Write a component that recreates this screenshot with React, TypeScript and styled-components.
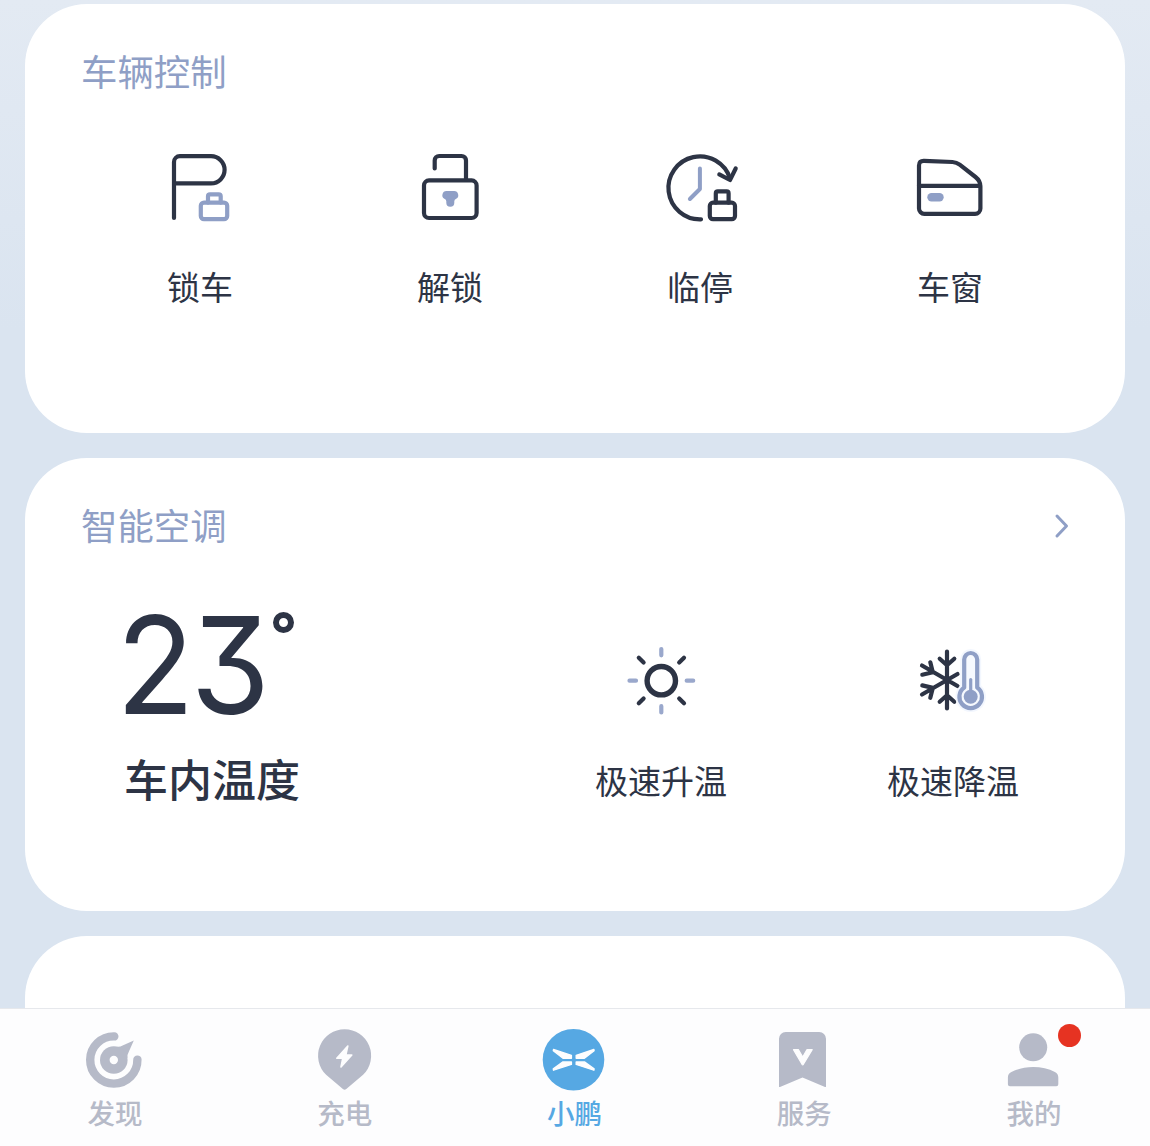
import React from 'react';
import styled, { createGlobalStyle } from 'styled-components';

const ink = '#2d3445';
const accent = '#8f9fc6';
const muted = '#b6bac8';
const brand = '#56a8e3';

const GlobalStyle = createGlobalStyle`
  *, *::before, *::after { box-sizing: border-box; }
  body {
    margin: 0;
    overflow: hidden;
    font-family: "Noto Sans CJK SC", "Noto Sans", sans-serif;
    color: ${ink};
  }
`;

const Screen = styled.div`
  display: flex;
  flex-direction: column;
  width: 1150px;
  height: 1146px;
  overflow: hidden;
  background: linear-gradient(180deg, #e3eaf3 0, #dae4f0 330px);
`;

const Feed = styled.main`
  flex: 1;
  min-height: 0;
  display: flex;
  flex-direction: column;
  gap: 25px;
  padding: 4px 25px 0;
  overflow: hidden;
`;

const Card = styled.section<{ $height: number }>`
  flex: none;
  height: ${(p) => p.$height}px;
  padding-top: 44px;
  border-radius: 62px;
  background: #fff;
`;

const CardHeader = styled.header`
  display: flex;
  align-items: center;
  justify-content: space-between;
  height: 44px;
  padding: 0 54px 0 56px;
`;

const CardTitle = styled.h2`
  margin: 0;
  font-size: 36.4px;
  font-weight: 400;
  line-height: 44px;
  color: ${accent};
`;

const ControlGrid = styled.div`
  display: grid;
  grid-template-columns: repeat(4, 1fr);
  padding: 56px 50px 0;
`;

const Action = styled.button<{ $gap: number }>`
  display: flex;
  flex-direction: column;
  align-items: center;
  gap: ${(p) => p.$gap}px;
  padding: 0;
  border: 0;
  background: none;
  font: inherit;
  color: inherit;
`;

const ActionLabel = styled.span`
  font-size: 33px;
  line-height: 40px;
  white-space: nowrap;
`;

const Climate = styled.div`
  display: grid;
  grid-template-columns: 391px 292px 292px;
  padding-left: 99px;
`;

const Temperature = styled.div`
  display: flex;
  flex-direction: column;
  padding-top: 48px;
`;

const Reading = styled.div`
  display: flex;
  height: 142px;
`;

const Degrees = styled.span`
  width: 156px;
  margin-left: -10px;
  font-family: Inter, sans-serif;
  font-size: 135px;
  font-weight: 400;
  line-height: 142px;
  letter-spacing: -7px;
  font-feature-settings: "cv09" 1, "tnum" 1;
  transform: scaleX(0.95);
  transform-origin: left center;
  white-space: nowrap;
`;

const DegreeMark = styled.i`
  width: 21px;
  height: 21px;
  margin-top: 18px;
  margin-left: 3px;
  border: 6px solid ${ink};
  border-radius: 50%;
`;

const TemperatureLabel = styled.span`
  margin-top: 16px;
  font-size: 44px;
  font-weight: 500;
  line-height: 52px;
`;

const ClimateAction = styled.div`
  display: flex;
  justify-content: center;
  padding-top: 95px;
`;

const TabBar = styled.nav`
  flex: none;
  display: grid;
  grid-template-columns: repeat(5, 1fr);
  height: 138px;
  padding: 19px 1px 0 0;
  border-top: 1px solid #e6e8ec;
  background: #fdfdfe;
`;

const Tab = styled.a<{ $active?: boolean }>`
  position: relative;
  display: flex;
  flex-direction: column;
  align-items: center;
  gap: 4px;
  color: ${(p) => (p.$active ? brand : muted)};
`;

const TabLabel = styled.span`
  font-size: 27.5px;
  font-weight: 500;
  line-height: 32px;
`;

const Badge = styled.i`
  position: absolute;
  top: -4px;
  left: 139px;
  width: 23px;
  height: 23px;
  border-radius: 50%;
  background: #e63322;
`;

const LineIcon = styled.svg`
  display: block;
  width: 80px;
  height: 80px;
  fill: none;
  stroke: ${ink};
  stroke-width: 4.2;
  stroke-linecap: round;
  stroke-linejoin: round;
`;

const TabIcon = styled.svg`
  display: block;
  width: 64px;
  height: 64px;
  fill: currentColor;
`;

const Chevron = styled.svg`
  width: 20px;
  height: 28px;
  margin-top: 4px;
  fill: none;
  stroke: ${accent};
  stroke-width: 3;
  stroke-linecap: round;
  stroke-linejoin: round;
`;

const ParkLockIcon = () => (
  <LineIcon viewBox="160 148 80 80">
    <path d="M174 218V162a5.8 5.8 0 0 1 5.8-5.8H211a13.6 13.6 0 0 1 0 27.2H174" />
    <g stroke={accent}>
      <rect x="200.800" y="202.600" width="26.400" height="16.600" rx="3.200" />
      <path d="M208 202.600v-6.300a2 2 0 0 1 2-2h8.700a2 2 0 0 1 2 2v6.300" />
    </g>
  </LineIcon>
);

const UnlockIcon = () => (
  <LineIcon viewBox="410 148 80 80">
    <rect x="424" y="180.400" width="52.600" height="37.600" rx="5" />
    <path d="M466 180V160.500a4.500 4.500 0 0 0-4.500-4.500H439.200a4.500 4.500 0 0 0-4.500 4.500V168.500" />
    <path
      d="M446.400 191h7.800a4.200 4.200 0 0 1 2 7.800q-1.900.9-1.900 2.500v1.400a4 4 0 0 1-8 0v-1.400q0-1.600-1.900-2.500a4.200 4.200 0 0 1 2-7.800z"
      fill={accent}
      stroke="none"
    />
  </LineIcon>
);

const TimedLockIcon = () => (
  <LineIcon viewBox="660 148 80 80">
    <path d="M701 219.400A31.500 31.500 0 1 1 730 178.500" />
    <path d="M719.300 174.400L730 180l5.700-11.500" />
    <path d="M699.900 168.500V189l-10 10" stroke={accent} strokeWidth="4" />
    <rect x="709.800" y="202.700" width="25.200" height="16.500" rx="3.200" />
    <path d="M715.800 202.700v-9.300a2 2 0 0 1 2-2h8.800a2 2 0 0 1 2 2v9.300" />
  </LineIcon>
);

const WindowIcon = () => (
  <LineIcon viewBox="910 148 80 80">
    <path d="M924 160.800L952.500 162q4 .2 7.200 2.700L975.500 177q4.900 3.800 4.900 9.500V208.500a5.300 5.300 0 0 1-5.300 5.300H924.300a5.300 5.300 0 0 1-5.300-5.300V165.500q0-4.900 5-4.700z" />
    <path d="M919 185.800H980" />
    <rect x="927.300" y="193" width="16.400" height="8.400" rx="4.200" fill={accent} stroke="none" />
  </LineIcon>
);

const SunIcon = () => (
  <LineIcon viewBox="621 641 80 80">
    <circle cx="661.300" cy="680.700" r="14.200" strokeWidth="5.400" />
    <path d="M638.800 657.800l4.800 4.800M684 657.800l-4.800 4.800M638.800 703.300l4.800-4.800M684 703.300l-4.800-4.800" />
    <path
      d="M661.300 649v6.300M661.300 706.200v6.300M629.500 680.700h6.500M686.700 680.700h6.500"
      stroke="#9aa8cc"
    />
  </LineIcon>
);

const CoolIcon = () => (
  <LineIcon viewBox="913 641 80 80">
    <path
      d="M947 651.500V708.500M939.700 658.700l7.300 6.500 7.300-6.500M939.700 701.800l7.300-6.500 7.300 6.500M957.500 674L922 694.500M957.500 686L922 665.500M930.300 662.300l2.500 9.900-10.500 2.500M930.300 697.800l2.500-9.900-10.500-2.500"
      strokeWidth="4.200"
    />
    <path
      d="M964.200 687.500V659.500a6.500 6.500 0 0 1 13 0V687.500a11.300 11.300 0 1 1-13 0z"
      stroke="#f3f7fe"
      strokeWidth="8"
      fill="#fff"
    />
    <path
      d="M964.200 687.500V659.500a6.500 6.500 0 0 1 13 0V687.500a11.300 11.300 0 1 1-13 0z"
      stroke={accent}
      strokeWidth="4.200"
      fill="#f6f9fe"
    />
    <path d="M970.700 679.500V696" stroke={accent} strokeWidth="3.200" />
    <circle cx="970.700" cy="696.700" r="7" fill={accent} stroke="none" />
  </LineIcon>
);

const DiscoverIcon = () => (
  <TabIcon viewBox="82.900 1028 64 64">
    <path
      d="M114.200 1036.400A23.600 23.600 0 1 0 137.300 1059.600"
      fill="none"
      stroke="currentColor"
      strokeWidth="8.400"
      strokeLinecap="round"
    />
    <path d="M117 1046.700q3 .3 5.500-1.200L133.700 1040.600 128.600 1052q-1.700 3-1.300 6z" />
    <circle cx="113.700" cy="1060" r="13.800" />
    <circle cx="113.700" cy="1060" r="4.200" fill="#fdfdfe" />
  </TabIcon>
);

const ChargeIcon = () => (
  <TabIcon viewBox="312.700 1028 64 64">
    <path d="M344.300 1029.200a26.500 26.500 0 0 1 18.500 45.500L346 1089q-1.700 1.400-3.400 0L325.800 1074.700a26.500 26.500 0 0 1 18.500-45.500z" />
    <path
      d="M347.500 1046L336.500 1058.200h6L340.700 1067 351.500 1055h-6z"
      fill="#fdfdfe"
      stroke="#fdfdfe"
      strokeWidth="1.600"
      strokeLinejoin="round"
    />
  </TabIcon>
);

const XpengIcon = () => (
  <TabIcon viewBox="542.500 1028 64 64">
    <circle cx="574" cy="1059.800" r="30.800" />
    <g fill="#fdfdfe" stroke="#fdfdfe" strokeWidth="1.400" strokeLinejoin="round">
      <path d="M554 1049.500L571.900 1055.300V1058.200H563.500L553.800 1050.800z" />
      <path d="M594.400 1049.500L576.700 1055.300V1058.200H584.900L594.600 1050.800z" />
      <path d="M554 1070.200L571.900 1064.400V1061.900H563.500L553.800 1068.900z" />
      <path d="M594.400 1070.200L576.700 1064.400V1061.900H584.900L594.600 1068.900z" />
    </g>
  </TabIcon>
);

const ServiceIcon = () => (
  <TabIcon viewBox="772.300 1028 64 64">
    <path d="M786 1032H819.500a6.800 6.800 0 0 1 6.800 6.800V1086.400q0 1-1 .6L802.800 1077.400 780.300 1087q-1 .4-1-.6V1038.800a6.800 6.800 0 0 1 6.700-6.800z" />
    <path
      d="M793.800 1049.700H798.800L803 1057 807.200 1049.700H812.500L803.700 1064.300q-.7 1-1.400 0z"
      fill="#fdfdfe"
      stroke="#fdfdfe"
      strokeWidth="1.200"
      strokeLinejoin="round"
    />
  </TabIcon>
);

const ProfileIcon = () => (
  <TabIcon viewBox="1002.100 1028 64 64">
    <circle cx="1033.300" cy="1047.300" r="14" />
    <path d="M1008 1077.500c0-2.500 1-4.200 3.500-5.500 12-6.700 31.500-6.700 43.500 0 2.400 1.300 3.400 3 3.400 5.500V1084.200a2 2 0 0 1-2 2H1010a2 2 0 0 1-2-2z" />
  </TabIcon>
);

const controls = [
  { label: '锁车', Icon: ParkLockIcon },
  { label: '解锁', Icon: UnlockIcon },
  { label: '临停', Icon: TimedLockIcon },
  { label: '车窗', Icon: WindowIcon },
];

const climateActions = [
  { label: '极速升温', Icon: SunIcon },
  { label: '极速降温', Icon: CoolIcon },
];

const tabs = [
  { label: '发现', Icon: DiscoverIcon },
  { label: '充电', Icon: ChargeIcon },
  { label: '小鹏', Icon: XpengIcon, active: true },
  { label: '服务', Icon: ServiceIcon },
  { label: '我的', Icon: ProfileIcon, badge: true },
];

export default function App() {
  return (
    <>
      <GlobalStyle />
      <Screen>
        <Feed>
          <Card $height={429}>
            <CardHeader>
              <CardTitle>车辆控制</CardTitle>
            </CardHeader>
            <ControlGrid>
              {controls.map(({ label, Icon }) => (
                <Action key={label} $gap={38}>
                  <Icon />
                  <ActionLabel>{label}</ActionLabel>
                </Action>
              ))}
            </ControlGrid>
          </Card>
          <Card $height={453}>
            <CardHeader>
              <CardTitle>智能空调</CardTitle>
              <Chevron viewBox="0 0 20 28">
                <path d="M6 4l9.500 10-9.500 10" />
              </Chevron>
            </CardHeader>
            <Climate>
              <Temperature>
                <Reading>
                  <Degrees>23</Degrees>
                  <DegreeMark />
                </Reading>
                <TemperatureLabel>车内温度</TemperatureLabel>
              </Temperature>
              {climateActions.map(({ label, Icon }) => (
                <ClimateAction key={label}>
                  <Action $gap={39}>
                    <Icon />
                    <ActionLabel>{label}</ActionLabel>
                  </Action>
                </ClimateAction>
              ))}
            </Climate>
          </Card>
          <Card $height={200} />
        </Feed>
        <TabBar>
          {tabs.map(({ label, Icon, active, badge }) => (
            <Tab key={label} $active={active}>
              <Icon />
              <TabLabel>{label}</TabLabel>
              {badge && <Badge />}
            </Tab>
          ))}
        </TabBar>
      </Screen>
    </>
  );
}
